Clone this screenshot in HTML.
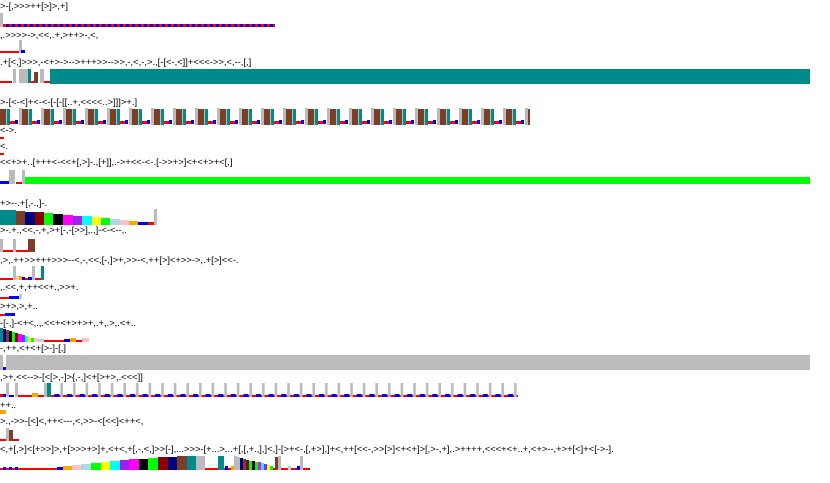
<!DOCTYPE html>
<html><head><meta charset="utf-8"><style>
html,body{margin:0;padding:0;background:#fff;width:830px;height:483px;overflow:hidden;position:relative}
.t{position:absolute;left:0;font-family:"Liberation Sans",sans-serif;font-size:9.4px;line-height:10px;color:#000;white-space:pre;letter-spacing:0}
svg{position:absolute;left:0;top:0}
</style></head><body>
<div class="t" style="top:1px">&gt;-[,&gt;&gt;&gt;++[&gt;]&gt;,+]</div>
<div class="t" style="top:30px">,.&gt;&gt;&gt;&gt;-&gt;,&lt;&lt;,.+,&gt;++&gt;-,&lt;,</div>
<div class="t" style="top:57px">.+[&lt;,]&gt;&gt;&gt;,-&lt;+&gt;-&gt;--&gt;+++&gt;&gt;--&gt;&gt;,-,&lt;,-,&gt;.,[-[&lt;-,&lt;]]+&lt;&lt;&lt;-&gt;&gt;,&lt;,--,[,]</div>
<div class="t" style="top:97px">&gt;-[&lt;-&lt;]+&lt;-&lt;-[-[-[[..+,&lt;&lt;&lt;&lt;..&gt;]]]&gt;+.]</div>
<div class="t" style="top:125px">&lt;-&gt;.</div>
<div class="t" style="top:141px">&lt;.</div>
<div class="t" style="top:157px">&lt;&lt;+&gt;+..[+++&lt;-&lt;&lt;+[,&gt;]-.,[+]],.-&gt;+&lt;&lt;-&lt;-.[-&gt;&gt;+&gt;]&lt;+&lt;+&gt;+&lt;[,]</div>
<div class="t" style="top:198px">+&gt;--.+[,-.,]-.</div>
<div class="t" style="top:225px">&gt;-.+.,&lt;&lt;,-,+,&gt;+[-,-[&gt;&gt;],.,]-&lt;-&lt;--,.</div>
<div class="t" style="top:255px">,&gt;,.++&gt;&gt;+++&gt;&gt;&gt;--&lt;,-,&lt;&lt;,[-,]&gt;+,&gt;&gt;-&lt;,++[&gt;]&lt;+&gt;&gt;-&gt;,.+[&gt;]&lt;&lt;-.</div>
<div class="t" style="top:282px">,.&lt;&lt;,+,++&lt;&lt;+.,&gt;&gt;+.</div>
<div class="t" style="top:301px">&gt;+&gt;,&gt;,+..</div>
<div class="t" style="top:318px">-[-,]-&lt;+&lt;,.,.&lt;&lt;+&lt;+&gt;+&gt;+,.+,.&gt;,.&lt;+..</div>
<div class="t" style="top:343px">-,++,&lt;+&lt;+[&gt;-]-[,]</div>
<div class="t" style="top:372px">,&gt;+,&lt;&lt;--&gt;-[&lt;[&gt;,-]&gt;{,-,]&lt;+[&gt;+&gt;,.&lt;&lt;&lt;]]</div>
<div class="t" style="top:400px">++..</div>
<div class="t" style="top:416px">&gt;.,-&gt;&gt;-[&lt;]&lt;,++&lt;---,&lt;,&gt;&gt;-&lt;[&lt;&lt;]&lt;++&lt;,</div>
<div class="t" style="top:444px">&lt;,+[,&gt;]&lt;[+&gt;&gt;]&gt;,+[&gt;&gt;&gt;+&gt;]+,&lt;+&lt;,+[,-,&lt;,]&gt;&gt;[-],...&gt;&gt;&gt;-[+...&gt;...+[,[,+.,],]&lt;,]-[&gt;+&lt;-,[,+&gt;],]+&lt;,++[&lt;&lt;-,&gt;&gt;[&gt;]&lt;+&lt;+]&gt;[,&gt;-,+],.&gt;++++,&lt;&lt;&lt;+&lt;+..+,&lt;+&gt;--,+&gt;+[&lt;]+&lt;[-&gt;-].</div>
<svg width="830" height="483" xmlns="http://www.w3.org/2000/svg">
<defs>
<pattern id="p1" x="3" y="0" width="6" height="483" patternUnits="userSpaceOnUse"><rect x="0" y="0" width="6" height="483" fill="#f00"/><rect x="3" y="0" width="3" height="483" fill="#00f"/></pattern>
<pattern id="p4" x="0" y="0" width="22" height="483" patternUnits="userSpaceOnUse">
<rect x="0" y="109" width="6" height="16" fill="#7b3f28"/><rect x="6" y="109" width="1" height="16" fill="#bbb"/><rect x="7" y="109" width="3" height="16" fill="#008b8b"/><rect x="10" y="121" width="5" height="3" fill="#f00"/><rect x="15" y="120" width="3" height="4" fill="#00f"/><rect x="19" y="108" width="3" height="17" fill="#bbb"/></pattern>
<pattern id="p15" x="0" y="0" width="12.6" height="483" patternUnits="userSpaceOnUse">
<rect x="0" y="395" width="12.6" height="2" fill="#f00"/><rect x="4" y="394" width="5" height="3" fill="#00f"/><rect x="10" y="383" width="3" height="14" fill="#bbb"/></pattern>
</defs>
<rect x="0" y="13" width="3" height="14" fill="#bbb"/>
<rect x="3" y="24" width="272" height="3" fill="url(#p1)"/>
<rect x="0" y="51" width="20" height="2" fill="#f00"/><rect x="19" y="40" width="3" height="13" fill="#bbb"/><rect x="21" y="50" width="4" height="3" fill="#00f"/>
<rect x="0" y="81" width="12" height="2" fill="#f00"/><rect x="13" y="69" width="3" height="14" fill="#bbb"/><rect x="19" y="69" width="9" height="14" fill="#bbb"/><rect x="28" y="69" width="3" height="14" fill="#008b8b"/><rect x="34" y="72" width="4" height="11" fill="#7b3f28"/><rect x="31" y="81" width="3" height="2" fill="#f00"/><rect x="40" y="69" width="4" height="14" fill="#bbb"/><rect x="44" y="81" width="6" height="2" fill="#f00"/>
<rect x="50" y="69" width="760" height="15" fill="#008b8b"/>
<rect x="0" y="107" width="530" height="18" fill="url(#p4)"/>
<rect x="0" y="137" width="4" height="2" fill="#f00"/>
<rect x="0" y="153" width="4" height="2" fill="#f00"/>
<rect x="0" y="181" width="9" height="3" fill="#00f"/><rect x="9" y="170" width="6" height="14" fill="#bbb"/><rect x="16" y="182" width="6" height="2" fill="#f00"/><rect x="22" y="170" width="3" height="14" fill="#bbb"/><rect x="25" y="177" width="785" height="7" fill="#0f0"/>
<rect x="0" y="210" width="6" height="15" fill="#008b8b"/><rect x="6" y="210" width="10" height="15" fill="#008b8b"/><rect x="16" y="211" width="9" height="14" fill="#7b3f28"/><rect x="25" y="212" width="10" height="13" fill="#000080"/><rect x="35" y="212" width="9" height="13" fill="#8b0000"/><rect x="44" y="213" width="9" height="12" fill="#0f0"/><rect x="53" y="214" width="10" height="11" fill="#000"/><rect x="63" y="215" width="10" height="10" fill="#f0f"/><rect x="73" y="216" width="9" height="9" fill="#a020f0"/><rect x="82" y="216" width="10" height="9" fill="#0ff"/><rect x="92" y="217" width="9" height="8" fill="#ff0"/><rect x="101" y="218" width="9" height="7" fill="#0f0"/><rect x="110" y="219" width="10" height="6" fill="#add8e6"/><rect x="120" y="220" width="9" height="5" fill="#ffc0cb"/><rect x="129" y="221" width="9" height="4" fill="#ffa500"/><rect x="138" y="222" width="10" height="3" fill="#00f"/><rect x="148" y="222" width="6" height="3" fill="#f00"/><rect x="154" y="209" width="3" height="16" fill="#bbb"/>
<rect x="0" y="239" width="3" height="13" fill="#bbb"/><rect x="3" y="250" width="10" height="2" fill="#f00"/><rect x="13" y="239" width="3" height="13" fill="#bbb"/><rect x="16" y="250" width="12" height="2" fill="#f00"/><rect x="28" y="239" width="7" height="13" fill="#7b3f28"/>
<rect x="0" y="278" width="13" height="2" fill="#f00"/><rect x="13" y="266" width="3" height="14" fill="#bbb"/><rect x="16" y="276" width="3" height="4" fill="#ffc0cb"/><rect x="19" y="276" width="3" height="4" fill="#ffa500"/><rect x="22" y="277" width="3" height="3" fill="#00f"/><rect x="25" y="278" width="3" height="2" fill="#f00"/><rect x="28" y="277" width="4" height="3" fill="#00f"/><rect x="32" y="266" width="3" height="14" fill="#bbb"/><rect x="35" y="278" width="6" height="2" fill="#f00"/><rect x="41" y="266" width="3" height="14" fill="#008b8b"/>
<rect x="0" y="297" width="9" height="2" fill="#f00"/><rect x="9" y="296" width="10" height="3" fill="#00f"/><rect x="19" y="294" width="3" height="5" fill="#add8e6"/>
<rect x="0" y="314" width="5" height="2" fill="#f00"/><rect x="5" y="313" width="10" height="3" fill="#00f"/>
<rect x="0" y="328" width="3" height="14" fill="#008b8b"/><rect x="3" y="329" width="3" height="13" fill="#000080"/><rect x="6" y="330" width="3" height="12" fill="#7b3f28"/><rect x="9" y="331" width="3" height="11" fill="#000"/><rect x="12" y="332" width="3" height="10" fill="#0f0"/><rect x="15" y="333" width="3" height="9" fill="#8b0000"/><rect x="18" y="334" width="4" height="8" fill="#f0f"/><rect x="22" y="335" width="3" height="7" fill="#a020f0"/><rect x="25" y="336" width="3" height="6" fill="#0ff"/><rect x="28" y="337" width="3" height="5" fill="#ff0"/><rect x="31" y="338" width="3" height="4" fill="#0f0"/><rect x="34" y="338" width="5" height="4" fill="#ffc0cb"/><rect x="39" y="339" width="5" height="3" fill="#add8e6"/><rect x="44" y="340" width="20" height="2" fill="#f00"/><rect x="64" y="339" width="6" height="3" fill="#00f"/><rect x="70" y="338" width="6" height="4" fill="#ffa500"/><rect x="76" y="340" width="6" height="2" fill="#f00"/><rect x="82" y="338" width="7" height="4" fill="#ffc0cb"/>
<rect x="0" y="355" width="3" height="15" fill="#bbb"/><rect x="3" y="367" width="3" height="3" fill="#00f"/><rect x="6" y="355" width="804" height="15" fill="#bbb"/>
<rect x="0" y="394" width="3" height="3" fill="#f00"/><rect x="3" y="394" width="3" height="3" fill="#00f"/><rect x="6" y="383" width="3" height="14" fill="#bbb"/><rect x="9" y="395" width="5" height="2" fill="#00f"/><rect x="15" y="383" width="3" height="14" fill="#bbb"/><rect x="18" y="395" width="14" height="2" fill="#f00"/><rect x="32" y="393" width="6" height="4" fill="#ffa500"/><rect x="38" y="395" width="6" height="2" fill="#f00"/><rect x="44" y="383" width="3" height="14" fill="#bbb"/><rect x="47" y="383" width="4" height="14" fill="#008b8b"/>
<rect x="51" y="383" width="467" height="14" fill="url(#p15)"/>
<rect x="0" y="410" width="6" height="4" fill="#ffa500"/>
<rect x="0" y="439" width="6" height="2" fill="#f00"/><rect x="6" y="428" width="3" height="13" fill="#bbb"/><rect x="9" y="430" width="4" height="11" fill="#7b3f28"/><rect x="13" y="439" width="6" height="2" fill="#f00"/>
<rect x="0" y="468" width="310" height="2" fill="#f00"/>
<rect x="3" y="467" width="3" height="3" fill="#00f"/><rect x="9" y="467" width="3" height="3" fill="#00f"/><rect x="15" y="467" width="3" height="3" fill="#00f"/>
<rect x="57" y="467" width="6" height="3" fill="#00f"/><rect x="63" y="466" width="9" height="4" fill="#ffa500"/><rect x="72" y="465" width="9" height="5" fill="#ffc0cb"/><rect x="81" y="464" width="10" height="6" fill="#add8e6"/><rect x="91" y="463" width="10" height="7" fill="#0f0"/><rect x="101" y="462" width="9" height="8" fill="#ff0"/><rect x="110" y="461" width="10" height="9" fill="#0ff"/><rect x="120" y="460" width="9" height="10" fill="#a020f0"/><rect x="129" y="459" width="10" height="11" fill="#f0f"/><rect x="139" y="459" width="9" height="11" fill="#000"/><rect x="148" y="458" width="10" height="12" fill="#0f0"/><rect x="158" y="457" width="10" height="13" fill="#8b0000"/><rect x="168" y="457" width="9" height="13" fill="#000080"/><rect x="177" y="456" width="10" height="14" fill="#7b3f28"/><rect x="187" y="456" width="9" height="14" fill="#008b8b"/><rect x="196" y="456" width="9" height="14" fill="#bbb"/>
<rect x="218" y="456" width="6" height="14" fill="#008b8b"/><rect x="225" y="466" width="3" height="4" fill="#00f"/><rect x="231" y="466" width="3" height="4" fill="#ffa500"/><rect x="234" y="456" width="3" height="14" fill="#bbb"/><rect x="237" y="457" width="3" height="13" fill="#bbb"/><rect x="240" y="458" width="3" height="12" fill="#000080"/><rect x="243" y="459" width="3" height="11" fill="#7b3f28"/><rect x="246" y="460" width="3" height="10" fill="#8b0000"/><rect x="249" y="461" width="3" height="9" fill="#0f0"/><rect x="252" y="461" width="3" height="9" fill="#000"/><rect x="255" y="462" width="3" height="8" fill="#0f0"/><rect x="258" y="462" width="3" height="8" fill="#f0f"/><rect x="261" y="463" width="3" height="7" fill="#0ff"/><rect x="264" y="464" width="3" height="6" fill="#a020f0"/><rect x="267" y="465" width="3" height="5" fill="#ff0"/><rect x="270" y="466" width="3" height="4" fill="#0f0"/><rect x="275" y="457" width="3" height="13" fill="#7b3f28"/><rect x="278" y="456" width="3" height="14" fill="#bbb"/><rect x="288" y="466" width="3" height="4" fill="#add8e6"/><rect x="297" y="466" width="3" height="4" fill="#00f"/><rect x="300" y="456" width="3" height="14" fill="#bbb"/>
</svg>
</body></html>
